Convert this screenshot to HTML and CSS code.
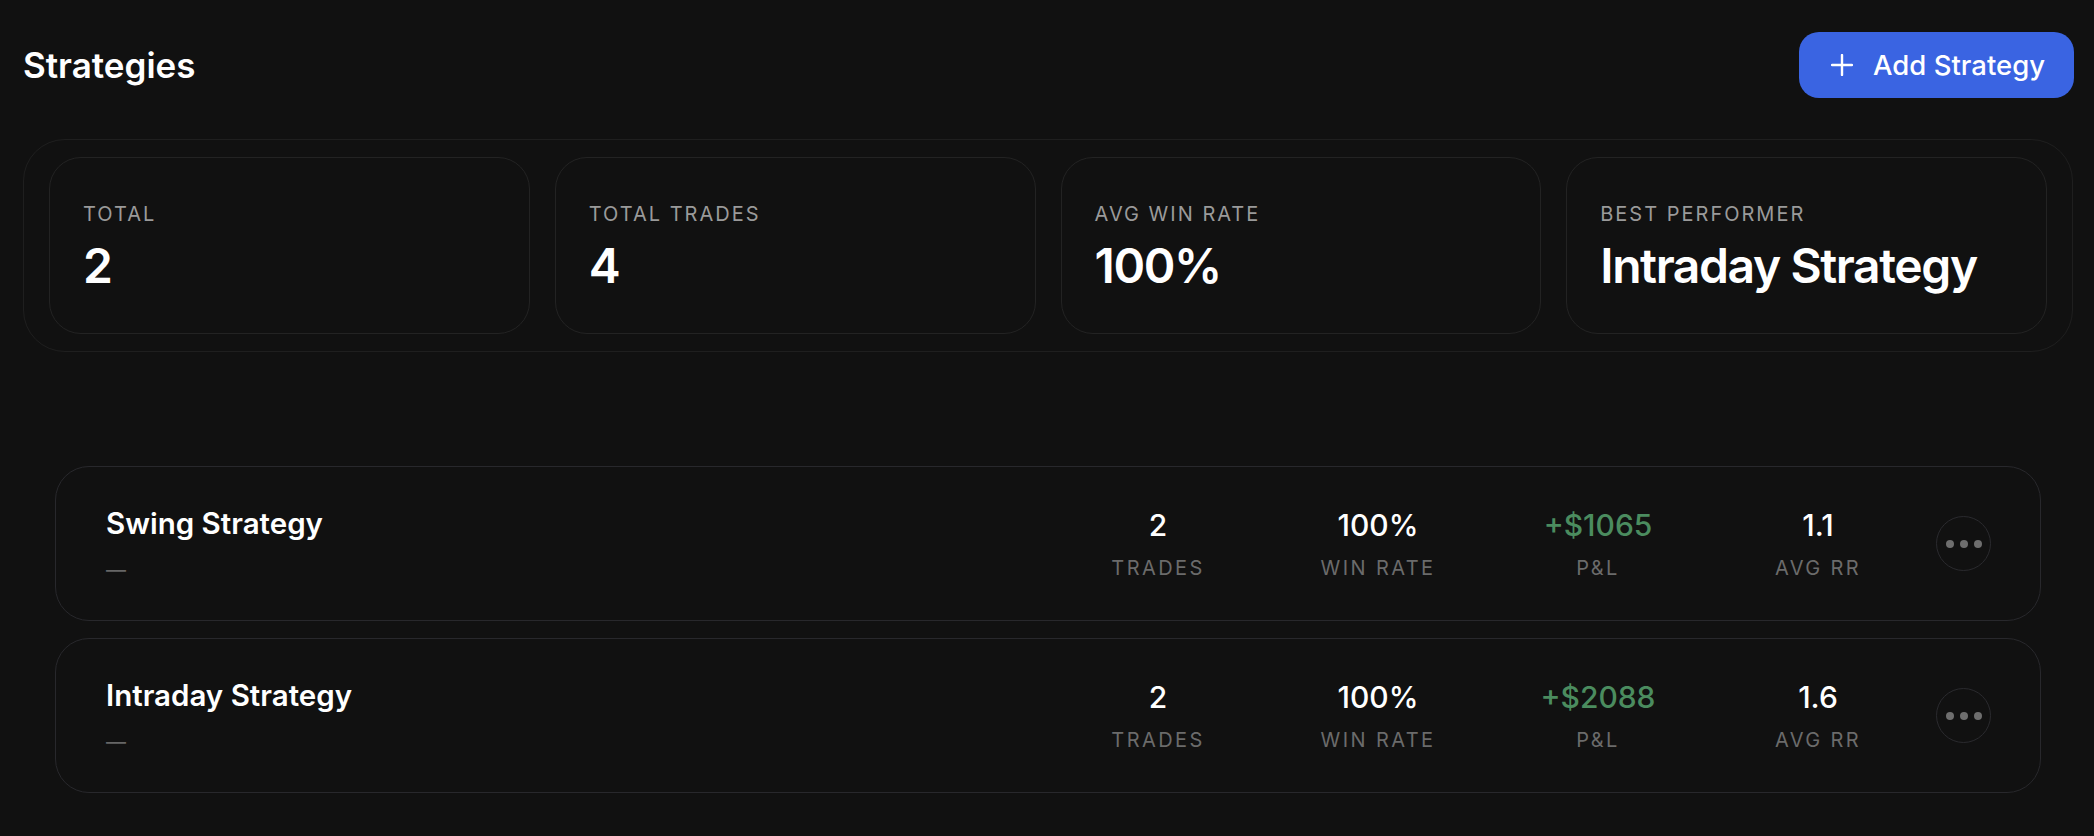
FILE: index.html
```html
<!DOCTYPE html>
<html>
<head>
    <title>Strategies</title>
    <link rel="stylesheet" href="styles.css">
</head>
<body>
    <div class="container">
        <div class="page-header">
            <h1 class="page-title">Strategies</h1>
            <button class="add-btn">
                <svg class="plus-icon" width="22" height="22" viewBox="0 0 22 22">
                    <path d="M11 1v20M1 11h20" stroke="#fff" stroke-width="2.4" stroke-linecap="round"/>
                </svg>
                <span>Add Strategy</span>
            </button>
        </div>

        <div class="summary">
            <div class="summary-card">
                <div class="summary-label">Total</div>
                <div class="summary-value">2</div>
            </div>
            <div class="summary-card">
                <div class="summary-label">Total Trades</div>
                <div class="summary-value">4</div>
            </div>
            <div class="summary-card">
                <div class="summary-label">Avg Win Rate</div>
                <div class="summary-value">100%</div>
            </div>
            <div class="summary-card">
                <div class="summary-label">Best Performer</div>
                <div class="summary-value">Intraday Strategy</div>
            </div>
        </div>

        <div class="strategy-list">
            <div class="strategy-row">
                <div class="strategy-info">
                    <div class="strategy-name">Swing Strategy</div>
                    <div class="strategy-desc">—</div>
                </div>
                <div class="strategy-stats">
                    <div class="stat">
                        <div class="stat-value">2</div>
                        <div class="stat-label">Trades</div>
                    </div>
                    <div class="stat">
                        <div class="stat-value">100%</div>
                        <div class="stat-label">Win Rate</div>
                    </div>
                    <div class="stat">
                        <div class="stat-value positive">+$1065</div>
                        <div class="stat-label">P&amp;L</div>
                    </div>
                    <div class="stat">
                        <div class="stat-value">1.1</div>
                        <div class="stat-label">Avg RR</div>
                    </div>
                </div>
                <button class="more-btn"><span></span><span></span><span></span></button>
            </div>

            <div class="strategy-row">
                <div class="strategy-info">
                    <div class="strategy-name">Intraday Strategy</div>
                    <div class="strategy-desc">—</div>
                </div>
                <div class="strategy-stats">
                    <div class="stat">
                        <div class="stat-value">2</div>
                        <div class="stat-label">Trades</div>
                    </div>
                    <div class="stat">
                        <div class="stat-value">100%</div>
                        <div class="stat-label">Win Rate</div>
                    </div>
                    <div class="stat">
                        <div class="stat-value positive">+$2088</div>
                        <div class="stat-label">P&amp;L</div>
                    </div>
                    <div class="stat">
                        <div class="stat-value">1.6</div>
                        <div class="stat-label">Avg RR</div>
                    </div>
                </div>
                <button class="more-btn"><span></span><span></span><span></span></button>
            </div>
        </div>
    </div>
</body>
</html>
```

FILE: styles.css
```css
* {
    box-sizing: border-box;
}
body {
    margin: 0;
    background-color: #111111;
    color: #ffffff;
    font-family: "Inter", "Noto Sans", sans-serif;
}
.container {
    padding: 32px 20px 0 23px;
}
.page-header {
    display: flex;
    align-items: center;
    justify-content: space-between;
    height: 66px;
}
.page-title {
    margin: 0;
    font-size: 35px;
    font-weight: 600;
}
.add-btn {
    display: flex;
    align-items: center;
    gap: 20px;
    height: 66px;
    padding: 0 29px 0 32px;
    background-color: #3a64e2;
    color: white;
    border: none;
    border-radius: 20px;
    font-family: inherit;
    font-size: 27.5px;
    font-weight: 500;
    cursor: pointer;
}
.add-btn:hover {
    background-color: #3459cc;
}
.summary {
    display: grid;
    grid-template-columns: repeat(4, 1fr);
    gap: 25px;
    margin-top: 41px;
    margin-right: 1px;
    padding: 17px 25px;
    border: 1px solid #1f1f1f;
    border-radius: 42px;
}
.summary-card {
    height: 177px;
    padding: 44px 33px 0;
    border: 1px solid #232323;
    border-radius: 32px;
}
.summary-label {
    font-size: 20px;
    line-height: 24px;
    color: #9a9a9a;
    text-transform: uppercase;
    letter-spacing: 2px;
}
.summary-value {
    margin-top: 12px;
    font-size: 48px;
    line-height: 56px;
    font-weight: 600;
    letter-spacing: -1.4px;
    white-space: nowrap;
}
.strategy-list {
    display: flex;
    flex-direction: column;
    gap: 17px;
    margin: 114px 33px 0 32px;
}
.strategy-row {
    display: flex;
    align-items: center;
    height: 155px;
    padding: 0 49px 0 50px;
    border: 1px solid #28282c;
    border-radius: 34px;
}
.strategy-info {
    flex: 1;
}
.strategy-name {
    font-size: 29.5px;
    line-height: 36px;
    font-weight: 600;
}
.strategy-desc {
    margin-top: 17px;
    font-size: 20px;
    line-height: 24px;
    color: #666666;
}
.strategy-stats {
    display: flex;
    gap: 80px;
}
.stat {
    width: 140px;
    text-align: center;
}
.stat-value {
    font-size: 30px;
    line-height: 36px;
    font-weight: 500;
}
.stat-value.positive {
    color: #4b8c5f;
}
.stat-label {
    margin-top: 13px;
    font-size: 20px;
    line-height: 24px;
    color: #6b6b6b;
    text-transform: uppercase;
    letter-spacing: 2.4px;
}
.more-btn {
    display: flex;
    align-items: center;
    justify-content: center;
    gap: 6px;
    width: 55px;
    height: 55px;
    margin-left: 48px;
    padding: 0;
    background: transparent;
    border: 1px solid #2a2a2e;
    border-radius: 50%;
    cursor: pointer;
}
.more-btn span {
    width: 8px;
    height: 8px;
    border-radius: 50%;
    background-color: #6e6e6e;
}
```
